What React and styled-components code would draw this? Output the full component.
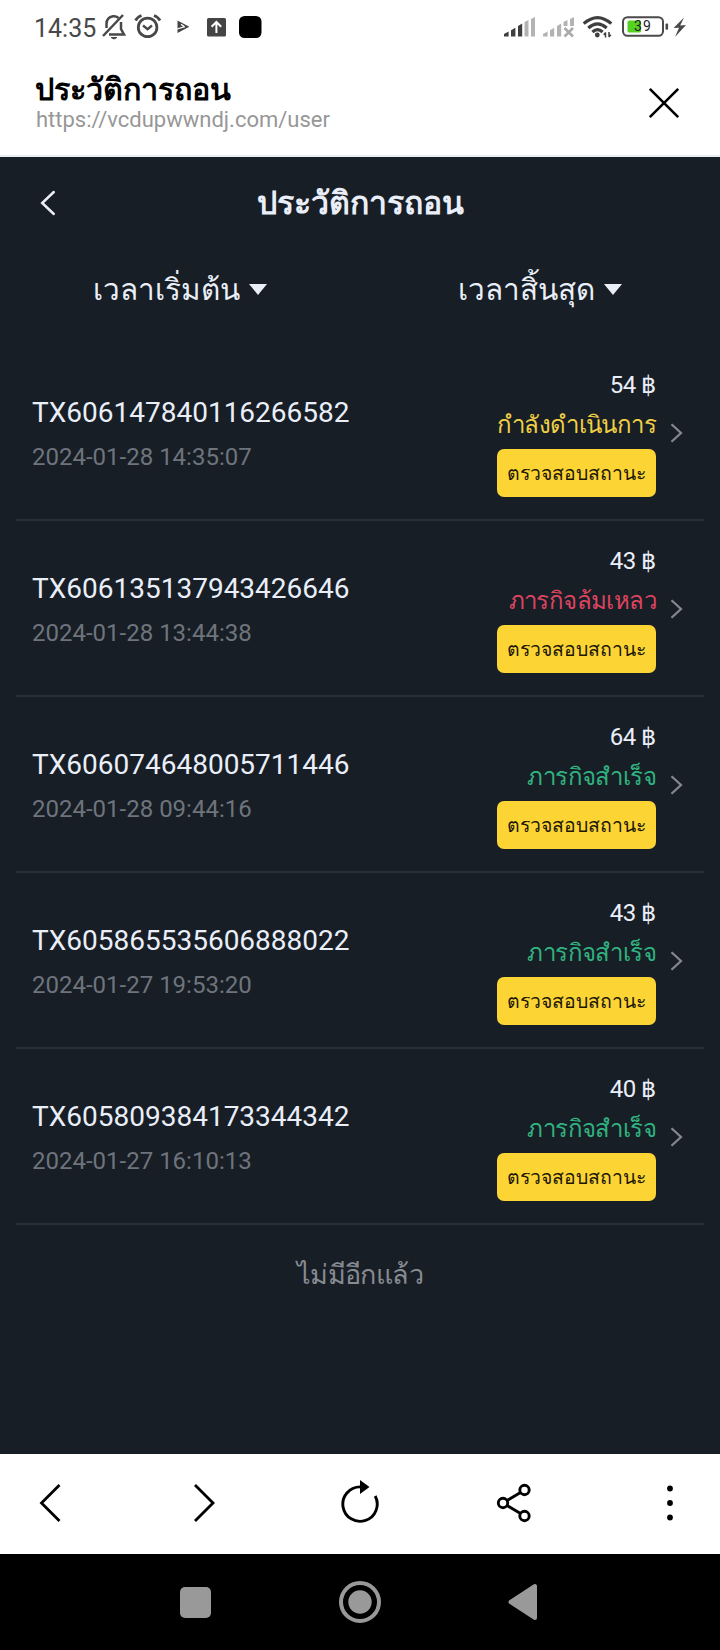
import React from 'react';
import styled, { createGlobalStyle } from 'styled-components';

const Color = {
  page: '#171e25',
  text: '#e9eef8',
  muted: '#6f747c',
  line: '#292f37',
  yellow: '#fcd535',
  pending: '#f0cf45',
  failed: '#dc4460',
  success: '#2fb380',
};

const history = [
  { id: 'TX606147840116266582', date: '2024-01-28 14:35:07', amount: 54, status: 'pending' },
  { id: 'TX606135137943426646', date: '2024-01-28 13:44:38', amount: 43, status: 'failed' },
  { id: 'TX606074648005711446', date: '2024-01-28 09:44:16', amount: 64, status: 'success' },
  { id: 'TX605865535606888022', date: '2024-01-27 19:53:20', amount: 43, status: 'success' },
  { id: 'TX605809384173344342', date: '2024-01-27 16:10:13', amount: 40, status: 'success' },
];

const statusText = {
  pending: 'กำลังดำเนินการ',
  failed: 'ภารกิจล้มเหลว',
  success: 'ภารกิจสำเร็จ',
};

// Android status bar
const StatusBar = () => (
  <StatusWrapper>
    <Clock>14:35</Clock>
    <LeftIcons width="166" height="32" viewBox="98 10 166 32">
      {/* muted bell */}
      <g fill="none" stroke="#484848" strokeWidth="2.5">
        <path d="M106.5 28 V24 C106.5 19 109 17 113 16.3 C115 16 117 16.7 118.5 18 M121 22 V29 L124 34.5 H109" />
        <path d="M103 36 L123 15" />
        <path d="M111 37.5 h6 l-3 1.5z" fill="#484848" strokeWidth="1" />
      </g>
      {/* alarm clock */}
      <g fill="none" stroke="#484848" strokeWidth="2.8">
        <circle cx="147.6" cy="27.4" r="9.3" />
        <path d="M143 25.5 l4.6 3.6 l4.4 -3.6" strokeWidth="2.4" />
        <path d="M135.5 20.5 C137 17.5 139 16.5 141.5 15.5 M154 15.5 C156.5 16.5 158.5 17.5 160 20.5" />
      </g>
      {/* play badge */}
      <path d="M177.5 20.5 L189.3 26.7 L177.5 33z" fill="#444" />
      <path d="M177 29 L185 26.7 M181 24.4 L184 26.2" fill="none" stroke="#fff" strokeWidth="1.3" />
      <rect x="207" y="18" width="19" height="18.5" rx="1.5" fill="#444" />
      <path d="M216.4 33 V22.5 M211.6 26.8 L216.4 22 L221.2 26.8" fill="none" stroke="#fff" strokeWidth="2" />
      <rect x="239" y="16" width="22.5" height="22" rx="5.5" fill="#000" />
    </LeftIcons>
    <svg width="186" height="32" viewBox="500 10 186 32">
      {/* signal, first sim */}
      <g fill="#3f3f3f">
        <path d="M504 34 l4.6 -2.5 V36.5 H504z" />
        <path d="M511 30.3 l4.4 -2.5 V36.5 H511z" />
        <path d="M518 26 l4.2 -2.5 V36.5 H518z" />
      </g>
      <g fill="#b3b3b3">
        <path d="M524.5 22 l4 -2 V36.5 H524.5z" />
        <path d="M531 19 l4 -2 V36.5 H531z" />
        {/* signal, second sim */}
        <path d="M543 34 l4.6 -2.5 V36.5 H543z" />
        <path d="M550 30.3 l4.2 -2.5 V36.5 H550z" />
        <path d="M557 26 l4.2 -2.5 V36.5 H557z" />
        <path d="M563.5 22 l4 -2 V26 H563.5z" />
        <path d="M570 19 l4 -2 V26 H570z" />
      </g>
      <path d="M564.5 28 L573 36.5 M573 28 L564.5 36.5" stroke="#aaa" strokeWidth="2.6" />
      {/* wifi */}
      <g fill="none" stroke="#3f3f3f" strokeWidth="3.2">
        <path d="M583.7 23.6 Q597.5 11.5 611.3 23.6" />
        <path d="M588.3 28 Q597.5 19.8 606.7 28" />
        <path d="M592.4 32 Q597.5 27.2 602.6 32" />
      </g>
      <circle cx="597.3" cy="35" r="2.4" fill="#3f3f3f" />
      <path d="M605.5 32.5 V37.5 M609 32 V37 M603.7 34.8 L605.7 32.5 M608.8 37 L610.8 34.7" stroke="#3f3f3f" strokeWidth="1.5" />
      {/* battery */}
      <rect x="623" y="17.2" width="40" height="18.6" rx="4.5" fill="#fff" stroke="#4a4a4a" strokeWidth="2" />
      <rect x="627.5" y="20.5" width="13.5" height="12" rx="1.5" fill="#55d120" />
      <rect x="665.5" y="23.5" width="2.6" height="6.3" rx="1" fill="#4a4a4a" />
      <BatteryLevel x="634" y="31.2">39</BatteryLevel>
      <path d="M684 17.5 L673.5 28 L679 27.8 L675 37 L686 25 L680.2 25.4z" fill="#4a4a4a" />
    </svg>
  </StatusWrapper>
);

const HistoryItem = ({ item }) => (
  <Item>
    <ItemInfo>
      <TxId>{item.id}</TxId>
      <TxDate>{item.date}</TxDate>
    </ItemInfo>
    <ItemResult>
      <Amount>{item.amount} ฿</Amount>
      <Status $type={item.status}>{statusText[item.status]}</Status>
      <CheckButton>ตรวจสอบสถานะ</CheckButton>
    </ItemResult>
    <svg width="14" height="22" viewBox="0.5 -1 14 22" fill="none" stroke="#858a91" strokeWidth="2.2">
      <path d="M2 2.2 L11.5 11 L2 19.8" />
    </svg>
  </Item>
);

const App = () => {
  return (
    <>
      <GlobalStyle />
      <Screen>
        <StatusBar />

        {/* in-app browser title */}
        <BrowserHeader>
          <div>
            <BrowserTitle>ประวัติการถอน</BrowserTitle>
            <BrowserUrl>https://vcdupwwndj.com/user</BrowserUrl>
          </div>
          <svg width="32" height="32" viewBox="0 0 32 32" stroke="#000" strokeWidth="2.6">
            <path d="M1.8 1.8 L30.2 30.2 M30.2 1.8 L1.8 30.2" />
          </svg>
        </BrowserHeader>

        <Page>
          <PageHeader>
            <svg width="16" height="26" viewBox="0 0 16 26" fill="none" stroke="#e9eef8" strokeWidth="2.5" strokeLinecap="round">
              <path d="M13.8 2 L2.2 13 L13.8 24" />
            </svg>
            <PageTitle>ประวัติการถอน</PageTitle>
          </PageHeader>

          <FilterBar>
            <Filter>
              <span>เวลาเริ่มต้น</span>
              <Caret />
            </Filter>
            <Filter>
              <span>เวลาสิ้นสุด</span>
              <Caret />
            </Filter>
          </FilterBar>

          <List>
            {history.map((item) => (
              <HistoryItem key={item.id} item={item} />
            ))}
          </List>
          <NoMore>ไม่มีอีกแล้ว</NoMore>
        </Page>

        {/* in-app browser controls */}
        <Toolbar>
          <svg width="40" height="40" viewBox="-8 0 40 40" fill="none" stroke="#000" strokeWidth="2.8">
            <path d="M21.5 2 L3.5 20 L21.5 38" />
          </svg>
          <svg width="40" height="40" viewBox="-7 0 40 40" fill="none" stroke="#000" strokeWidth="2.8">
            <path d="M3 2 L21 20 L3 38" />
          </svg>
          <svg width="40" height="48" viewBox="0 0 40 48">
            <path d="M20 7.9 A17.2 17.2 0 1 0 35.2 17" fill="none" stroke="#000" strokeWidth="2.9" />
            <path d="M20 1 L29.5 8 L20 15z" />
          </svg>
          <svg width="40" height="40" viewBox="-0.5 0 40 40" fill="none" stroke="#000" strokeWidth="2.9">
            <circle cx="7.5" cy="20" r="4.7" />
            <circle cx="29" cy="7" r="4.7" />
            <circle cx="29" cy="33" r="4.7" />
            <path d="M12 17.3 L24.6 9.8 M12 22.7 L24.6 30.2" />
          </svg>
          <svg width="40" height="40" viewBox="-16 0 40 40">
            <circle cx="4" cy="5.5" r="2.9" />
            <circle cx="4" cy="20" r="2.9" />
            <circle cx="4" cy="34.5" r="2.9" />
          </svg>
        </Toolbar>

        <SystemNav>
          <svg width="31" height="31" viewBox="0 0 31 31">
            <rect width="31" height="31" rx="5" fill="#999" />
          </svg>
          <svg width="42" height="42" viewBox="0 0 42 42">
            <circle cx="21" cy="21" r="19" fill="none" stroke="#999" strokeWidth="4" />
            <circle cx="21" cy="21" r="11.7" fill="#999" />
          </svg>
          <svg width="30" height="38" viewBox="0 0 30 38">
            <path d="M2.5 19 L27 3 V35z" fill="#999" stroke="#999" strokeWidth="4" strokeLinejoin="round" />
          </svg>
        </SystemNav>
      </Screen>
    </>
  );
};

export default App;

const GlobalStyle = createGlobalStyle`
  * {
    box-sizing: border-box;
  }

  body {
    margin: 0;
    font-family: Roboto, 'Droid Sans Thai', 'Liberation Sans', serif;
    background-color: #fff;
  }

  svg {
    display: block;
    flex: none;
  }
`;

const Screen = styled.div`
  width: 720px;
  height: 1650px;
  display: flex;
  flex-direction: column;
  overflow: hidden;
  white-space: nowrap;
`;

const StatusWrapper = styled.div`
  height: 58px;
  padding: 10px 34px 0 34px;
  display: flex;
`;

const Clock = styled.span`
  width: 64px;
  font-size: 25px;
  line-height: 37px;
  color: #484848;
`;

const LeftIcons = styled.svg`
  margin-right: auto;
`;

const BatteryLevel = styled.text`
  font-size: 14px;
  letter-spacing: 1.2px;
  fill: #222;
`;

const BrowserHeader = styled.header`
  height: 99px;
  padding: 12px 40px 0 35px;
  border-bottom: 2px solid #e9edf4;
  display: flex;
  justify-content: space-between;

  svg {
    margin-top: 17px;
  }
`;

const BrowserTitle = styled.div`
  height: 38px;
  font-size: 30.5px;
  font-weight: 700;
  line-height: 39px;
  color: #000;
`;

const BrowserUrl = styled.div`
  padding-left: 1px;
  font-size: 22px;
  line-height: 24px;
  color: #979797;
`;

const Page = styled.main`
  height: 1297px;
  background-color: ${Color.page};
  color: ${Color.text};
`;

const PageHeader = styled.div`
  height: 92px;
  padding: 0 40px;
  display: grid;
  grid-template-columns: 16px 1fr 16px;
  align-items: center;
`;

const PageTitle = styled.h1`
  margin: 0;
  font-size: 32px;
  font-weight: 700;
  line-height: 40px;
  text-align: center;
`;

const FilterBar = styled.div`
  height: 96px;
  display: grid;
  grid-template-columns: 1fr 1fr;
`;

const Filter = styled.div`
  height: 81px;
  display: flex;
  justify-content: center;
  align-items: center;
  gap: 9px;
  font-size: 29.7px;
  line-height: 40px;
`;

const Caret = styled.i`
  border: 9px solid transparent;
  border-top: 11px solid ${Color.text};
  border-bottom: 0;
`;

const List = styled.ul`
  margin: 0 16px;
  padding: 0;
  list-style: none;
`;

const Item = styled.li`
  height: 176px;
  padding: 0 20px 0 16px;
  border-bottom: 2px solid ${Color.line};
  display: flex;
  align-items: center;
`;

const ItemInfo = styled.div`
  flex: 1;
  padding-top: 6px;
`;

const TxId = styled.div`
  font-size: 28px;
  line-height: 44px;
`;

const TxDate = styled.div`
  font-size: 24px;
  line-height: 44px;
  color: ${Color.muted};
`;

const ItemResult = styled.div`
  margin-right: 14px;
  display: flex;
  flex-direction: column;
  align-items: flex-end;
`;

const Amount = styled.div`
  height: 36px;
  font-size: 24px;
  line-height: 36px;
  letter-spacing: -0.4px;
`;

const Status = styled.div`
  height: 46px;
  font-size: 24px;
  line-height: 45px;
  letter-spacing: -0.6px;
  color: ${(props) => Color[props.$type]};
`;

const CheckButton = styled.button`
  width: 159px;
  height: 48px;
  padding: 0;
  border: none;
  border-radius: 7px;
  background-color: ${Color.yellow};
  color: #1c1708;
  font-family: inherit;
  font-size: 19.4px;
  line-height: 49px;
  white-space: nowrap;
`;

const NoMore = styled.div`
  font-size: 27px;
  line-height: 100px;
  letter-spacing: -0.6px;
  text-align: center;
  color: #868a91;
`;

const Toolbar = styled.nav`
  height: 100px;
  padding: 0 30px 2px;
  display: flex;
  justify-content: space-between;
  align-items: center;
`;

const SystemNav = styled.nav`
  height: 96px;
  padding: 0 182px 0 180px;
  background-color: #000;
  display: flex;
  justify-content: space-between;
  align-items: center;
`;
